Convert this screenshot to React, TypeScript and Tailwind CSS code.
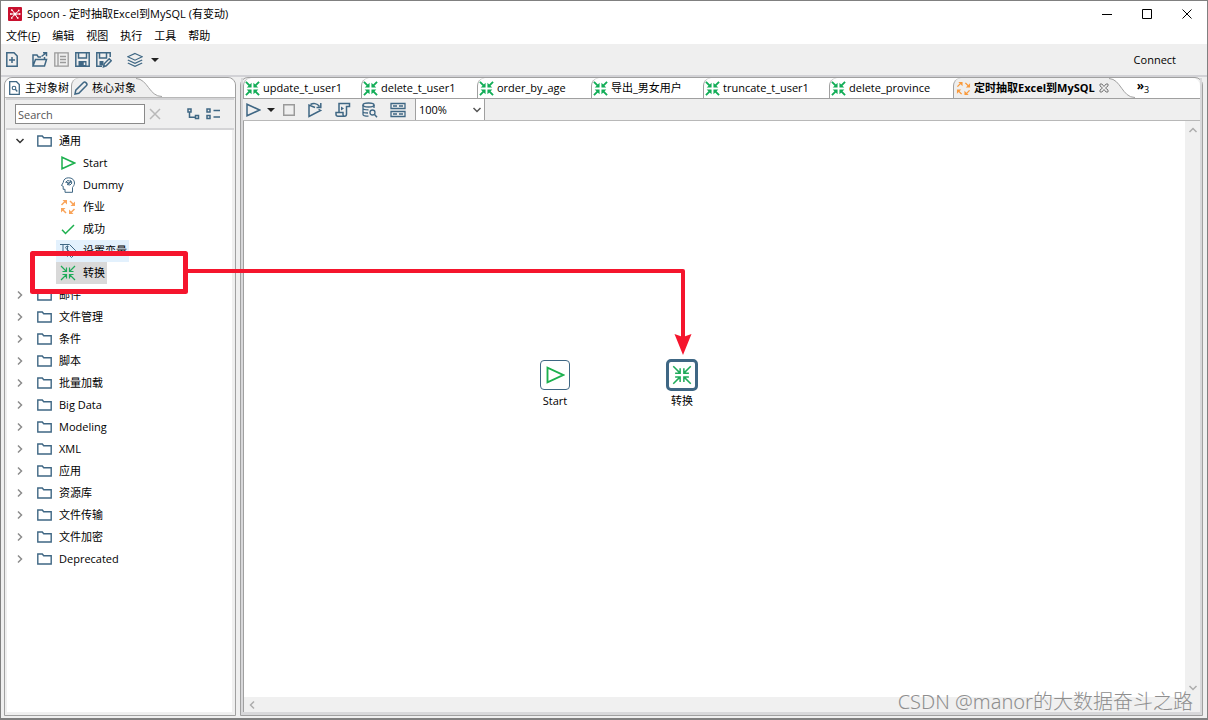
import type { ReactNode } from 'react';

type IconProps = { className?: string };

const Svg = ({ className = '', box = '0 0 16 16', children }: IconProps & { box?: string; children: ReactNode }) => (
  <svg viewBox={box} className={`block shrink-0 ${className}`} fill="none" stroke="currentColor" strokeWidth="1.5" aria-hidden="true">
    {children}
  </svg>
);

const PlayIcon = ({ className = 'size-4' }: IconProps) => (
  <Svg className={className}>
    <path d="M2 2.200v11.600L14.500 8z" />
  </Svg>
);

const InwardIcon = ({ className = 'size-4' }: IconProps) => (
  <Svg className={className}>
    <path d="M1 1l5.500 5.500M15 1L9.500 6.500M1 15l5.500-5.500M15 15L9.500 9.500M2.500 6.500h4v-4M13.500 6.500h-4v-4M2.500 9.500h4v4M13.500 9.500h-4v4" strokeWidth="1.200" />
  </Svg>
);

// heavier version with solid heads, for small sizes
const InwardSolidIcon = ({ className = 'size-4' }: IconProps) => (
  <Svg className={className}>
    <path d="M1 1l4 4M15 1l-4 4M1 15l4-4M15 15l-4-4" strokeWidth="2" />
    <path d="M7 7V1.800L5.200 3.600 3.600 5.200 1.800 7zM9 7V1.800L12.400 5.200 14.200 7zM7 9v5.200L3.600 10.800 1.800 9zM9 9v5.200l3.400-3.400L14.200 9z" fill="currentColor" stroke="none" />
  </Svg>
);

const CycleIcon = ({ className = 'size-4' }: IconProps) => (
  <Svg className={className}>
    <path d="M1.500 6L5.500 2M10 2l4 4M14.500 10l-4 4M6 14l-4-4" strokeWidth="1.500" />
    <path d="M2.500 1H7v4.500zM15 2.500V7h-4.500zM13.500 15H9v-4.500zM1 13.500V9h4.500z" fill="currentColor" stroke="none" />
  </Svg>
);

const FolderIcon = () => (
  <Svg className="h-3 w-[15px]" box="0 0 15 12">
    <path d="M.8 11V1h4.500l1.400 1.800h7.500V11z" strokeWidth="1.400" />
  </Svg>
);

const HeadIcon = () => (
  <Svg className="size-4">
    <path d="M5 15.300v-3H3.200v-3L1.500 8.500l1.700-3C3.500 2 6 .8 8.700.8c3.500 0 5.800 2.200 5.800 5.200 0 2.300-1.500 3.500-2 4.500v4.800M5 15.300h7.500" strokeWidth="1" />
    <path d="M5.500 5.500l2-2 2 .5M7 7.500l3 .5 2-2-2-3" strokeWidth="1" />
    <path d="M6 4.500l2.500 2L11.500 4" />
  </Svg>
);

const CheckIcon = () => (
  <Svg className="size-4">
    <path d="M2 8.800l3.500 3.700L14 4" />
  </Svg>
);

const VariableIcon = () => (
  <Svg className="size-4">
    <path d="M0 1.500h9.500l6 6-5 5M3 1.500v8l5 4M8.500 3.500C6 3 5 4 6 5.500S9.500 7 9 9 6 10.500 5.500 9.500M7.500 2.500v8" strokeWidth="1" />
    <path d="M9.500 12.500l2 2 4-4" strokeWidth="1" />
  </Svg>
);

const FilePlusIcon = () => (
  <Svg className="h-[15px] w-3" box="0 0 12 15">
    <path d="M.8.8h7.200l3.200 3.200v10.200H.8zM6 5v6M3 8h6" />
  </Svg>
);

const OpenIcon = () => (
  <Svg className="size-4">
    <path d="M1 14V3h4l1.300 2H9M1 14l2.500-6.500h11L12.500 14zM12.500 7.500V5M9.500 4.500L14 1M11 .8h3.500v3.500" />
  </Svg>
);

const ListIcon = () => (
  <Svg className="size-[15px]" box="0 0 15 15">
    <path d="M.8.8h13.400v13.400H.8zM4 1v13M6 4.500h6M6 7.500h6M6 10.500h6" strokeWidth="1.300" />
  </Svg>
);

const SaveIcon = () => (
  <Svg className="size-[15px]" box="0 0 15 15">
    <path d="M.8.8h13.400v13.400H.8zM3.500 1v5h8V1" />
    <path d="M3.500 9h8v5h-8z" fill="currentColor" stroke="none" />
    <path d="M9.500 10.500v2.500" stroke="#efefef" />
  </Svg>
);

const SaveAsIcon = () => (
  <Svg className="size-4">
    <path d="M6 14.200H.8V.8h13.400V5M3.500 1v5h7V1" />
    <path d="M3.500 9h4v4.500h-4z" fill="currentColor" stroke="none" />
    <path d="M7.500 14.800l.7-3 5-5 2 2-5 5z" />
  </Svg>
);

const LayersIcon = () => (
  <Svg className="size-4">
    <path d="M8 1.500l7.200 3.300L8 8.200.8 4.800zM.8 8L8 11.400 15.200 8M.8 11L8 14.400 15.200 11" strokeWidth="1.200" />
  </Svg>
);

const TreeFileIcon = () => (
  <Svg className="h-[14px] w-[11px]" box="0 0 11 14">
    <path d="M.7.7h6.800l2.800 2.800v9.800H.7z" strokeWidth="1.300" />
    <circle cx="5" cy="7" r="1.800" strokeWidth="1.100" />
    <path d="M6.300 8.300l2 2.200" strokeWidth="1.300" />
  </Svg>
);

const PencilIcon = () => (
  <Svg className="size-[14px]" box="0 0 14 14">
    <path d="M1 13l.8-3.800L9.500 1.500c1.500-1.500 4.500 1.500 3 3L4.800 12.200z" />
  </Svg>
);

const RunOptionsIcon = () => (
  <Svg className="size-4">
    <path d="M8 5.500L2 3v11.500l11.500-6-2-1M3.500 2.500C6 1 10 1 12.500 4.500M13.800 1v4.500H9.500" />
  </Svg>
);

const ScriptIcon = () => (
  <Svg className="size-4">
    <path d="M4 10V1.500h10.500v3h-3V12c0 1.500-1 2.300-2 2.300H3c-1.200 0-2-.8-2-2V10.500h7v2c0 1 .5 1.800 1.500 1.800" />
    <path d="M6 4.500v4L9 6.500z" fill="currentColor" stroke="none" />
  </Svg>
);

const DatabaseIcon = () => (
  <Svg className="size-4">
    <ellipse cx="6.500" cy="3" rx="5.500" ry="2" />
    <path d="M1 3v9.500c0 1 2.500 1.700 5.500 1.700M12 3v3M1 6.200c0 1 2 1.600 5.500 1.600M1 9.400c0 1 2 1.600 5 1.600" strokeWidth="1.300" />
    <circle cx="10.500" cy="10.500" r="2.500" strokeWidth="1.300" />
    <path d="M12.500 12.500l2.500 2.700" />
  </Svg>
);

const GridIcon = () => (
  <Svg className="size-4">
    <path d="M1 1.500h14v5H1zM1 9.500h14v5H1zM3 4h4M9 4h4M3 12h4M9 12h4" strokeWidth="1.300" />
  </Svg>
);

const ExpandTreeIcon = () => (
  <Svg className="h-3 w-[13px]" box="0 0 13 12">
    <path d="M1 1h3v3H1zM8.500 7.500h3v3h-3zM2.500 4v5.200h6" />
  </Svg>
);

const CollapseTreeIcon = () => (
  <Svg className="h-3 w-[15px]" box="0 0 15 12">
    <path d="M1 1h3v3H1zM1 7.500h3v3H1zM7.500 2.500H14M7.500 9H14" />
  </Svg>
);

const Chevron = ({ className = '' }: IconProps) => (
  <Svg className={`size-[10px] ${className}`} box="0 0 10 10">
    <path d="M1.500 3L5 6.500 8.500 3" />
  </Svg>
);

const Caret = () => (
  <Svg className="h-1 w-2" box="0 0 8 4">
    <path d="M0 0h8L4 4z" fill="#222" stroke="none" />
  </Svg>
);

// slanted right edge of a selected tab
const TabCurve = () => (
  <svg viewBox="0 0 26 20" preserveAspectRatio="none" className="block h-full w-[26px] shrink-0" aria-hidden="true">
    <path d="M0 .5C12 1 13 19.500 26 19.500V20H0z" fill="#efefef" />
    <path d="M0 .5C12 1 13 19.500 26 19.500" fill="none" stroke="#a0a0a0" />
  </svg>
);

const menus = ['编辑', '视图', '执行', '工具', '帮助'];

const steps = [
  { label: 'Start', icon: <PlayIcon />, color: 'text-[#1cb04e]', bg: '' },
  { label: 'Dummy', icon: <HeadIcon />, color: 'text-[#3f6784]', bg: '' },
  { label: '作业', icon: <CycleIcon />, color: 'text-[#f9a45a]', bg: '' },
  { label: '成功', icon: <CheckIcon />, color: 'text-[#1cb04e]', bg: '' },
  { label: '设置变量', icon: <VariableIcon />, color: 'text-[#3f6784]', bg: 'bg-[#e3f1fd]' },
  { label: '转换', icon: <InwardIcon />, color: 'text-[#1faa59]', bg: 'bg-[#d9d9d9]' },
];

const folders = ['邮件', '文件管理', '条件', '脚本', '批量加载', 'Big Data', 'Modeling', 'XML', '应用', '资源库', '文件传输', '文件加密', 'Deprecated'];

const tabs = [
  { label: 'update_t_user1', width: 'w-[118px]' },
  { label: 'delete_t_user1', width: 'w-[116px]' },
  { label: 'order_by_age', width: 'w-[114px]' },
  { label: '导出_男女用户', width: 'w-[112px]' },
  { label: 'truncate_t_user1', width: 'w-[126px]' },
  { label: 'delete_province', width: 'w-[124px]' },
];

function TitleBar() {
  return (
    <header className="bg-white">
      <div className="flex h-[25px] items-center pl-[7px]">
        <Svg className="size-[14px] text-white" box="0 0 14 14">
          <rect width="14" height="14" rx="1" fill="#c8102e" stroke="none" />
          <path d="M7 7L4 3M7 7l3.500-3M7 7H2.500M7 7h5M7 7l-3 3.500M7 7l2.500 4" strokeWidth="1" />
          <circle cx="7" cy="7" r="1.500" fill="currentColor" stroke="none" />
          <path d="M3 3h1.500M10 3.500h1.500M2 7h1.500M11 7h1.500M3 11h1.500M9 11h1.500" />
        </Svg>
        <h1 className="ml-[5px]">Spoon - 定时抽取Excel到MySQL (有变动)</h1>
        <div className="ml-auto flex h-full text-black">
          <button aria-label="Minimize" className="grid w-10 place-items-center">
            <Svg className="size-[10px]" box="0 0 10 10"><path d="M0 5.500h10" strokeWidth="1" /></Svg>
          </button>
          <button aria-label="Maximize" className="grid w-10 place-items-center">
            <Svg className="size-[10px]" box="0 0 10 10"><path d="M.5.5h9v9h-9z" strokeWidth="1" /></Svg>
          </button>
          <button aria-label="Close" className="grid w-10 place-items-center">
            <Svg className="size-[10px]" box="0 0 10 10"><path d="M.5.5l9 9M9.500.5l-9 9" strokeWidth="1" /></Svg>
          </button>
        </div>
      </div>
      <nav className="flex h-[18px] items-center gap-3 pt-[2px] pl-[5px]">
        <button>文件(<u>F</u>)</button>
        {menus.map((m) => (
          <button key={m}>{m}</button>
        ))}
      </nav>
    </header>
  );
}

function MainToolbar() {
  return (
    <div className="flex h-[31px] items-center pr-[31px] pl-[5px] text-[#3f6784]">
      <button aria-label="New"><FilePlusIcon /></button>
      <button aria-label="Open" className="ml-[14px]"><OpenIcon /></button>
      <button aria-label="Explore repository" className="ml-[6px] text-[#9a9a9a]"><ListIcon /></button>
      <button aria-label="Save" className="ml-[6px]"><SaveIcon /></button>
      <button aria-label="Save as" className="ml-[6px]"><SaveAsIcon /></button>
      <button aria-label="Perspective" className="ml-[15px] flex items-center gap-2"><LayersIcon /><Caret /></button>
      <button className="ml-auto text-black">Connect</button>
    </div>
  );
}

function SidePanel() {
  return (
    <aside className="flex w-[232px] shrink-0 flex-col rounded-t-lg border border-[#a0a0a0] bg-[#efefef]">
      <div className="flex h-5 rounded-t-lg border-b border-[#b8b8b8] bg-white">
        <button className="flex items-center gap-[5px] pl-1">
          <span className="text-[#3f6784]"><TreeFileIcon /></span>主对象树
        </button>
        <button className="ml-[2px] flex items-center gap-1 rounded-tl-lg border-l border-[#a0a0a0] bg-[#efefef] pl-[2px]">
          <span className="text-[#3f6784]"><PencilIcon /></span>核心对象
        </button>
        <TabCurve />
      </div>
      <div className="mx-px flex h-8 items-center border-y-2 border-[#d4d4d6] pr-[13px] pl-[9px]">
        <input aria-label="Search" placeholder="Search" className="h-5 w-[130px] border border-[#8a8a8a] bg-white px-[2px] placeholder:text-[#555]" />
        <button aria-label="Clear" className="ml-1 text-[#b9b9b9]">
          <Svg className="size-3" box="0 0 12 12"><path d="M1 1l10 10M11 1L1 11" /></Svg>
        </button>
        <button aria-label="Expand all" className="ml-auto text-[#3f6784]"><ExpandTreeIcon /></button>
        <button aria-label="Collapse all" className="ml-[6px] text-[#3f6784]"><CollapseTreeIcon /></button>
      </div>
      <ul className="mr-px mb-[2px] ml-[2px] min-h-0 flex-1 border-r-2 border-b border-[#f0f0f0] bg-white">
        <li>
          <div className="flex h-[22px] items-center pl-2">
            <Chevron className="text-[#333]" />
            <span className="mr-[7px] ml-3 text-[#3f6784]"><FolderIcon /></span>
            通用
          </div>
          <ul>
            {steps.map((s) => (
              <li key={s.label} className="flex h-[22px] pl-[49px]">
                <div className={`flex items-center gap-[7px] pr-[2px] pl-1 ${s.bg}`}>
                  <span className={s.color}>{s.icon}</span>
                  {s.label}
                </div>
              </li>
            ))}
          </ul>
        </li>
        {folders.map((f) => (
          <li key={f} className="flex h-[22px] items-center pl-2">
            <Chevron className="-rotate-90 text-[#8c8c8c]" />
            <span className="mr-[7px] ml-3 text-[#3f6784]"><FolderIcon /></span>
            {f}
          </li>
        ))}
      </ul>
    </aside>
  );
}

function EditorTabs() {
  return (
    <div className="flex h-[21px] shrink-0 rounded-t-lg border-b border-[#a0a0a0] bg-white">
      {tabs.map((t) => (
        <button key={t.label} className={`flex shrink-0 items-center gap-[3px] rounded-tl-lg border-l border-[#a0a0a0] pl-px whitespace-nowrap ${t.width}`}>
          <InwardSolidIcon className="size-[15px] text-[#12ad57]" />
          {t.label}
        </button>
      ))}
      <button className="flex shrink-0 items-center gap-[3px] rounded-tl-lg border-l border-[#a0a0a0] bg-[#efefef] pl-[2px] font-bold whitespace-nowrap">
        <CycleIcon className="size-[15px] text-[#f99a3c]" />
        定时抽取Excel到MySQL
        <Svg className="ml-px size-[10px] text-[#777]" box="0 0 10 10">
          <path d="M1 1h2l2 2.500L7 1h2v2L6.500 5 9 7v2H7L5 6.500 3 9H1V7l2.500-2L1 3z" strokeWidth="1" />
        </Svg>
      </button>
      <TabCurve />
      <button aria-label="3 more tabs" className="ml-[2px] flex items-center">
        <span className="mb-1 text-xs leading-4 font-bold">»</span>
        <span className="mt-1 text-[9px] leading-4">3</span>
      </button>
    </div>
  );
}

function EditorToolbar() {
  return (
    <div className="flex h-[22px] shrink-0 items-center border-b border-[#b8b8b8] pl-[2px] text-[#3f6784]">
      <button aria-label="Run" className="flex items-center gap-[6px]"><PlayIcon /><Caret /></button>
      <button aria-label="Stop" className="ml-2 text-[#9a9a9a]">
        <Svg className="size-3" box="0 0 12 12"><path d="M.7.7h10.600v10.600H.7z" /></Svg>
      </button>
      <button aria-label="Replay" className="ml-3"><RunOptionsIcon /></button>
      <button aria-label="Generate SQL" className="ml-3"><ScriptIcon /></button>
      <button aria-label="Explore database" className="ml-[11px]"><DatabaseIcon /></button>
      <button aria-label="Show results" className="ml-3"><GridIcon /></button>
      <div className="relative ml-[9px] h-full">
        <select aria-label="Zoom" className="h-full w-[70px] appearance-none border-x border-[#a0a0a0] bg-white pl-[3px] text-black" defaultValue="100%">
          <option>100%</option>
          <option>75%</option>
          <option>50%</option>
        </select>
        <Chevron className="pointer-events-none absolute top-[6px] right-[3px] text-[#555]" />
      </div>
    </div>
  );
}

function Canvas() {
  return (
    <div className="flex min-h-0 flex-1 flex-col border-l border-[#a0a0a0]">
      <div className="flex min-h-0 flex-1">
        <div className="relative flex-1 bg-white">
          <div className="absolute top-[239px] left-[296px] flex w-[30px] flex-col items-center gap-[3px]">
            <div className="grid size-[30px] place-items-center rounded-sm border border-[#3f6784] text-[#1cb04e]">
              <PlayIcon className="size-5" />
            </div>
            Start
          </div>
          <div className="absolute top-[238px] left-[422px] flex w-8 flex-col items-center gap-[2px]">
            <div className="grid size-8 place-items-center rounded-[5px] border-[3px] border-[#3f6784] text-[#1faa59]">
              <InwardIcon className="size-5" />
            </div>
            转换
          </div>
        </div>
        <div className="flex w-[15px] flex-col items-center justify-between bg-[#f0f0f0] py-1 text-[#adadad]">
          <Chevron className="rotate-180" />
          <Chevron />
        </div>
      </div>
      <div className="flex h-[15px] items-center bg-[#f0f0f0] pl-[3px] text-[#adadad]">
        <Chevron className="rotate-90" />
      </div>
    </div>
  );
}

export default function App() {
  return (
    <div className="relative flex h-screen flex-col border-x border-t border-b-2 border-[#808080] bg-[#efefef] font-['Open_Sans','Noto_Sans_CJK_SC',sans-serif] text-[11px] leading-4 text-black">
      <TitleBar />
      <MainToolbar />
      <main className="flex min-h-0 flex-1 gap-1 border-t-2 border-[#d2d2d6] pr-1 pb-[2px] pl-[3px]">
        <SidePanel />
        <section className="flex min-w-0 flex-1 flex-col rounded-t-lg border border-[#a0a0a0]">
          <div className="flex min-h-0 flex-1 flex-col border-x-2 border-b-[3px] border-[#d8d8da]">
            <EditorTabs />
            <EditorToolbar />
            <Canvas />
          </div>
        </section>
      </main>

      {/* drag hint from the palette to the canvas */}
      <svg viewBox="0 0 720 400" className="pointer-events-none absolute -top-px -left-px h-[400px] w-[720px]" fill="none" stroke="#f5152d" aria-hidden="true">
        <rect x="32.500" y="253.500" width="153" height="38" strokeWidth="5" strokeLinejoin="round" />
        <path d="M187 271h496v66" strokeWidth="4" strokeLinejoin="round" />
        <path d="M683 355l-8.500-21 8.500 3 8.500-3z" fill="#f5152d" stroke="none" />
      </svg>
      <p className="pointer-events-none absolute right-[14px] bottom-1 font-['Noto_Sans','Noto_Sans_CJK_SC',sans-serif] text-xl leading-6 font-light text-[#8e8e8e]">
        CSDN @manor的大数据奋斗之路
      </p>
    </div>
  );
}
